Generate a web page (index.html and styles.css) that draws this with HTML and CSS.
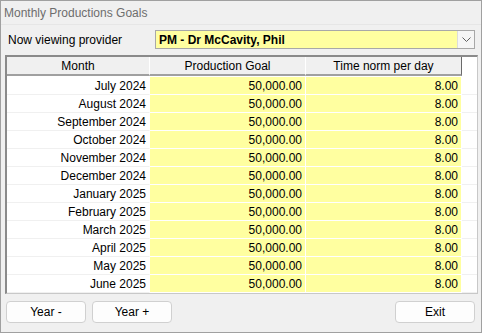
FILE: index.html
```html
<!DOCTYPE html>
<html>
<head>
<meta charset="utf-8">
<link rel="stylesheet" href="styles.css">
</head>
<body>
<div class="window">
  <div class="title">Monthly Productions Goals</div>
  <div class="provider-row">
    <span class="label">Now viewing provider</span>
    <div class="combo">
      <span class="combo-text">PM - Dr McCavity, Phil</span>
      <span class="combo-btn"><svg width="9" height="5" viewBox="0 0 9 5"><path d="M0.5 0.5 L4.5 4.5 L8.5 0.5" fill="none" stroke="#606060" stroke-width="1"/></svg></span>
    </div>
  </div>
  <div class="grid">
    <div class="head">
      <div class="hcell">Month</div>
      <div class="hcell">Production Goal</div>
      <div class="hcell">Time norm per day</div>
      <div class="hfill"></div>
    </div>
    <div class="body">
      <div class="row"><div class="c month">July 2024</div><div class="c y">50,000.00</div><div class="c y">8.00</div><div class="c e"></div></div>
      <div class="row"><div class="c month">August 2024</div><div class="c y">50,000.00</div><div class="c y">8.00</div><div class="c e"></div></div>
      <div class="row"><div class="c month">September 2024</div><div class="c y">50,000.00</div><div class="c y">8.00</div><div class="c e"></div></div>
      <div class="row"><div class="c month">October 2024</div><div class="c y">50,000.00</div><div class="c y">8.00</div><div class="c e"></div></div>
      <div class="row"><div class="c month">November 2024</div><div class="c y">50,000.00</div><div class="c y">8.00</div><div class="c e"></div></div>
      <div class="row"><div class="c month">December 2024</div><div class="c y">50,000.00</div><div class="c y">8.00</div><div class="c e"></div></div>
      <div class="row"><div class="c month">January 2025</div><div class="c y">50,000.00</div><div class="c y">8.00</div><div class="c e"></div></div>
      <div class="row"><div class="c month">February 2025</div><div class="c y">50,000.00</div><div class="c y">8.00</div><div class="c e"></div></div>
      <div class="row"><div class="c month">March 2025</div><div class="c y">50,000.00</div><div class="c y">8.00</div><div class="c e"></div></div>
      <div class="row"><div class="c month">April 2025</div><div class="c y">50,000.00</div><div class="c y">8.00</div><div class="c e"></div></div>
      <div class="row"><div class="c month">May 2025</div><div class="c y">50,000.00</div><div class="c y">8.00</div><div class="c e"></div></div>
      <div class="row"><div class="c month">June 2025</div><div class="c y">50,000.00</div><div class="c y">8.00</div><div class="c e"></div></div>
    </div>
  </div>
  <div class="buttons">
    <button class="btn">Year -</button>
    <button class="btn">Year +</button>
    <span class="spacer"></span>
    <button class="btn">Exit</button>
  </div>
</div>
</body>
</html>
```

FILE: styles.css
```css
* { box-sizing: border-box; }
html, body { margin: 0; padding: 0; background: #f0f0f0; }
body { font-family: "Liberation Sans", Arial, sans-serif; font-size: 12px; color: #000; }
.window {
  width: 482px; height: 333px;
  border: 1px solid #a0a0a0;
  background: #f0f0f0;
  display: flex; flex-direction: column;
}
.title {
  height: 24px;
  padding: 5px 0 0 3px;
  color: #6d6d6d;
  font-size: 12px;
  border-bottom: 1px solid #e6e6e6;
}
.provider-row {
  display: flex; align-items: center;
  height: 19px;
  margin-top: 5px;
  padding-left: 7px;
}
.label { width: 147px; font-size: 12px; }
.combo {
  width: 320px; height: 19px;
  background: #ffffa0;
  border: 1px solid #a8a8a8;
  display: flex; align-items: center;
}
.combo-text { flex: 1; font-weight: bold; font-size: 12px; padding-left: 3px; }
.combo-btn {
  width: 17px; height: 17px;
  background: #f6f6f6;
  border-left: 1px solid #dcdcdc;
  display: flex; align-items: center; justify-content: center;
}
.grid {
  margin: 6px 0 0 4px;
  width: 473px; height: 239px;
  border-top: 2px solid #8a8a8a;
  border-left: 2px solid #8a8a8a;
  border-right: 1px solid #c8c8c8;
  border-bottom: 1px solid #c8c8c8;
  background: #fff;
  display: flex; flex-direction: column;
}
.head {
  display: grid;
  grid-template-columns: 143px 156px 156px 1fr;
  height: 20px;
  background: #fff;
}
.hcell {
  background: #f0f0f0;
  text-align: center;
  font-size: 12px;
  line-height: 19px;
  border-right: 1px solid #fff;
  border-bottom: 2px solid #a0a0a0;
  height: 19px;
}
.hcell:nth-child(3) { border-right: 1px solid #6a6a6a; }
.hfill { background: #fff; }
.body { display: flex; flex-direction: column; }
.row {
  display: grid;
  grid-template-columns: 143px 156px 156px 1fr;
  height: 18px;
}
.c {
  text-align: right;
  font-size: 12px;
  line-height: 19px;
  padding-right: 3px;
  border-right: 1px solid #fff;
  border-bottom: 1px solid #f0f0f0;
  background: #fff;
  overflow: hidden;
}
.c.y { background: #ffffa0; border-bottom-color: #fff; border-right: 1px solid #fff; }
.c.e { border-right: none; border-bottom-color: #f0f0f0; }
.buttons {
  display: flex;
  gap: 6px;
  margin-top: 7px;
  padding: 0 6px 0 5px;
}
.spacer { flex: 1; }
.btn {
  width: 80px; height: 22px;
  border: 1px solid #d0d0d0;
  border-radius: 4px;
  background: #fdfdfd;
  font-family: "Liberation Sans", Arial, sans-serif;
  font-size: 12px;
  color: #000;
  padding: 0;
}
```
